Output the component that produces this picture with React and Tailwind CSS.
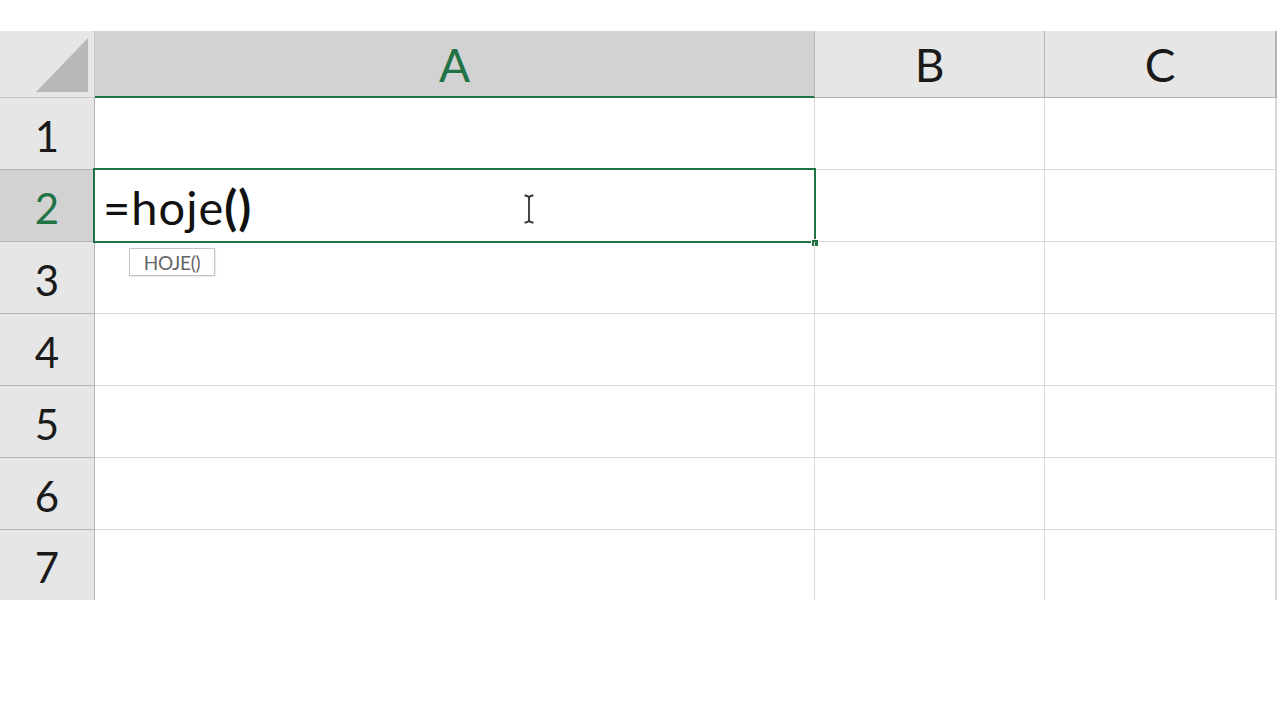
import React from "react";

const rows = [1, 2, 3, 4, 5, 6, 7];
const font = { fontFamily: "Lato, 'Open Sans', sans-serif" };

const App = () => {
  return (
    <div className="w-[1280px] h-[720px] bg-white overflow-hidden" style={font}>
      <div className="h-[31px]" />
      <div className="grid grid-cols-[95px_720px_230px_232px] grid-rows-[67px_repeat(6,72px)_70px]">
        {/* corner */}
        <div className="relative bg-[#e6e6e6] border-r border-b border-[#c6c6c6]">
          <svg className="absolute left-0 top-0" width="95" height="67">
            <polygon points="36,61 88,7 88,61" fill="#b8b8b8" />
          </svg>
        </div>
        <div className="bg-[#d2d2d2] border-r border-[#bdbdbd] border-b-2 border-b-[#217346] flex items-center justify-center text-[46px] text-[#217346] leading-none pt-[2px]">
          A
        </div>
        <div className="bg-[#e6e6e6] border-r border-b border-[#b4b4b4] flex items-center justify-center text-[46px] text-[#1a1a1a] leading-none pt-[2px]">
          B
        </div>
        <div className="bg-[#e6e6e6] border-r-2 border-b border-[#b4b4b4] flex items-center justify-center text-[46px] text-[#1a1a1a] leading-none pt-[2px]">
          C
        </div>

        {rows.map((r) => (
          <React.Fragment key={r}>
            <div
              className={
                "border-r border-b border-[#b4b4b4] flex items-center justify-center text-[42px] leading-none pt-[4px] " +
                (r === 2 ? "bg-[#d2d2d2] text-[#217346]" : "bg-[#e6e6e6] text-[#1a1a1a]") +
                (r === 7 ? " border-b-0" : "")
              }
            >
              {r}
            </div>
            <div className={"relative border-r border-b border-[#dadada]" + (r === 7 ? " border-b-0" : "")}>
              {r === 2 && (
                <>
                  <div className="absolute -left-[2px] -top-[2px] -right-[2px] -bottom-[2px] border-2 border-[#217346]" />
                  <div className="absolute -right-[5px] -bottom-[6px] w-[8px] h-[8px] bg-[#217346] border border-white" />
                  <div className="absolute left-[8px] top-0 h-full flex items-center text-[47px] tracking-[1px] text-[#111] leading-none pt-[4px]">
                    =hoje<span className="font-bold">()</span>
                  </div>
                  <svg className="absolute left-[428px] top-[24px]" width="12" height="30" viewBox="0 0 12 30">
                    <path d="M1.5 1.5 Q6 1.5 6 4.5 L6 25.5 Q6 28.5 1.5 28.5 M10.5 1.5 Q6 1.5 6 4.5 M6 25.5 Q6 28.5 10.5 28.5" stroke="#333" strokeWidth="1.8" fill="none" />
                  </svg>
                </>
              )}
              {r === 3 && (
                <div className="absolute left-[34px] top-[6px] w-[86px] h-[28px] flex items-center justify-center bg-white border border-[#c4c4c4] shadow-[1px_1px_1px_rgba(0,0,0,0.08)] text-[19px] tracking-[-0.3px] text-[#666] leading-none">
                  HOJE()
                </div>
              )}
            </div>
            <div className={"border-r border-b border-[#dadada]" + (r === 7 ? " border-b-0" : "")} />
            <div className={"border-r-2 border-b border-[#dadada]" + (r === 7 ? " border-b-0" : "")} />
          </React.Fragment>
        ))}
      </div>
    </div>
  );
};

export default App;
